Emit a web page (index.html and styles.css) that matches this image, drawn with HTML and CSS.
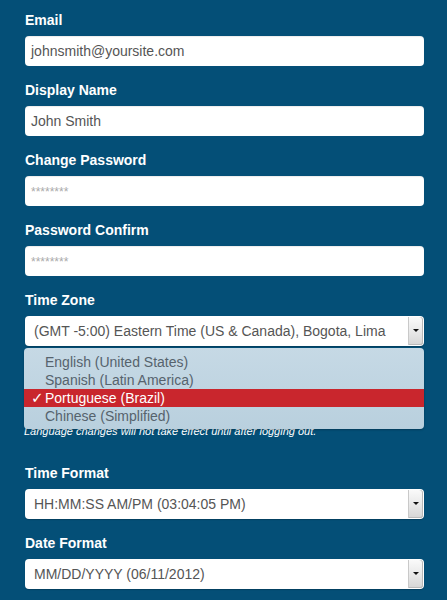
FILE: index.html
```html
<!DOCTYPE html>
<html>
<head>
<meta charset="utf-8">
<link rel="stylesheet" href="styles.css">
</head>
<body>
<form class="form">
  <div class="group">
    <label class="label">Email</label>
    <div class="field">johnsmith@yoursite.com</div>
  </div>
  <div class="group">
    <label class="label">Display Name</label>
    <div class="field">John Smith</div>
  </div>
  <div class="group">
    <label class="label">Change Password</label>
    <div class="field pw">********</div>
  </div>
  <div class="group">
    <label class="label">Password Confirm</label>
    <div class="field pw">********</div>
  </div>
  <div class="group">
    <label class="label">Time Zone</label>
    <div class="select"><span class="select-text">(GMT -5:00) Eastern Time (US &amp; Canada), Bogota, Lima</span><span class="select-btn"><span class="tri"></span></span></div>
  </div>
  <div class="group lang">
    <label class="label covered">Language</label>
    <div class="select"><span class="select-text covered">Portuguese (Brazil)</span><span class="select-btn"><span class="tri"></span></span></div>
    <p class="hint">Language changes will not take effect until after logging out.</p>
    <ul class="menu">
      <li class="opt">English (United States)</li>
      <li class="opt">Spanish (Latin America)</li>
      <li class="opt sel"><span class="check">✓</span>Portuguese (Brazil)</li>
      <li class="opt">Chinese (Simplified)</li>
    </ul>
  </div>
  <div class="group">
    <label class="label">Time Format</label>
    <div class="select"><span class="select-text">HH:MM:SS AM/PM (03:04:05 PM)</span><span class="select-btn"><span class="tri"></span></span></div>
  </div>
  <div class="group">
    <label class="label">Date Format</label>
    <div class="select"><span class="select-text">MM/DD/YYYY (06/11/2012)</span><span class="select-btn"><span class="tri"></span></span></div>
  </div>
</form>
</body>
</html>
```
FILE: styles.css
```css
html, body {
  margin: 0;
  padding: 0;
  background: #044f77;
}
body {
  width: 447px;
  height: 600px;
  overflow: hidden;
  font-family: "Liberation Sans", Arial, sans-serif;
}
.form {
  padding: 12px 0 0 25px;
  width: 399px;
}
.group {
  margin-bottom: 16px;
}
.label {
  display: block;
  color: #ffffff;
  font-weight: bold;
  font-size: 14px;
  line-height: 17px;
  margin-bottom: 7px;
}
.covered {
  visibility: hidden;
}
.field {
  height: 30px;
  background: #ffffff;
  border-radius: 4px;
  box-sizing: border-box;
  padding: 0 6px;
  font-size: 14px;
  line-height: 30px;
  color: #555555;
  box-shadow: inset 0 1px 1px rgba(0,0,0,0.08);
}
.field.pw {
  font-size: 12px;
  color: #aaaaaa;
  line-height: 32px;
}
.select {
  display: flex;
  height: 30px;
  background: #ffffff;
  border-radius: 4px;
  box-sizing: border-box;
  padding: 1px 1px 1px 0;
  font-size: 14px;
  color: #555555;
  box-shadow: 0 1px 1px rgba(0,0,0,0.2);
}
.select-text {
  flex: 1;
  padding-left: 9px;
  line-height: 28px;
  white-space: nowrap;
  overflow: hidden;
}
.select-btn {
  width: 14px;
  display: flex;
  align-items: center;
  justify-content: center;
  background: linear-gradient(#fafafa, #e6e6e6 60%, #d6d6d6);
  border-left: 1px solid #c9c9c9;
  border-radius: 0 3px 3px 0;
  box-shadow: inset -1px 0 0 #b9b9b9, inset 0 -1px 0 #bbbbbb;
}
.tri {
  width: 0;
  height: 0;
  border-left: 3px solid transparent;
  border-right: 3px solid transparent;
  border-top: 3px solid #111111;
  margin-top: -2px;
}
.lang {
  position: relative;
  margin-bottom: 27px;
}
.hint {
  margin: 8px 0 0 -1px;
  color: #ffffff;
  font-style: italic;
  font-size: 11px;
  line-height: 14px;
}
.menu {
  position: absolute;
  top: -14px;
  left: -1px;
  width: 400px;
  margin: 0;
  padding: 5px 0 4px;
  list-style: none;
  box-sizing: border-box;
  background: linear-gradient(#c6d9e5, #b9d0de);
  border-radius: 4px;
  box-shadow: 0 1px 2px rgba(0,0,0,0.25);
}
.opt {
  position: relative;
  height: 18px;
  line-height: 18px;
  padding-left: 21px;
  font-size: 14px;
  color: #56636d;
}
.opt.sel {
  background: #c9262d;
  color: #ffffff;
}
.check {
  position: absolute;
  left: 7px;
  top: 0;
  font-family: "DejaVu Sans", sans-serif;
  font-weight: bold;
  font-size: 15px;
}
```
